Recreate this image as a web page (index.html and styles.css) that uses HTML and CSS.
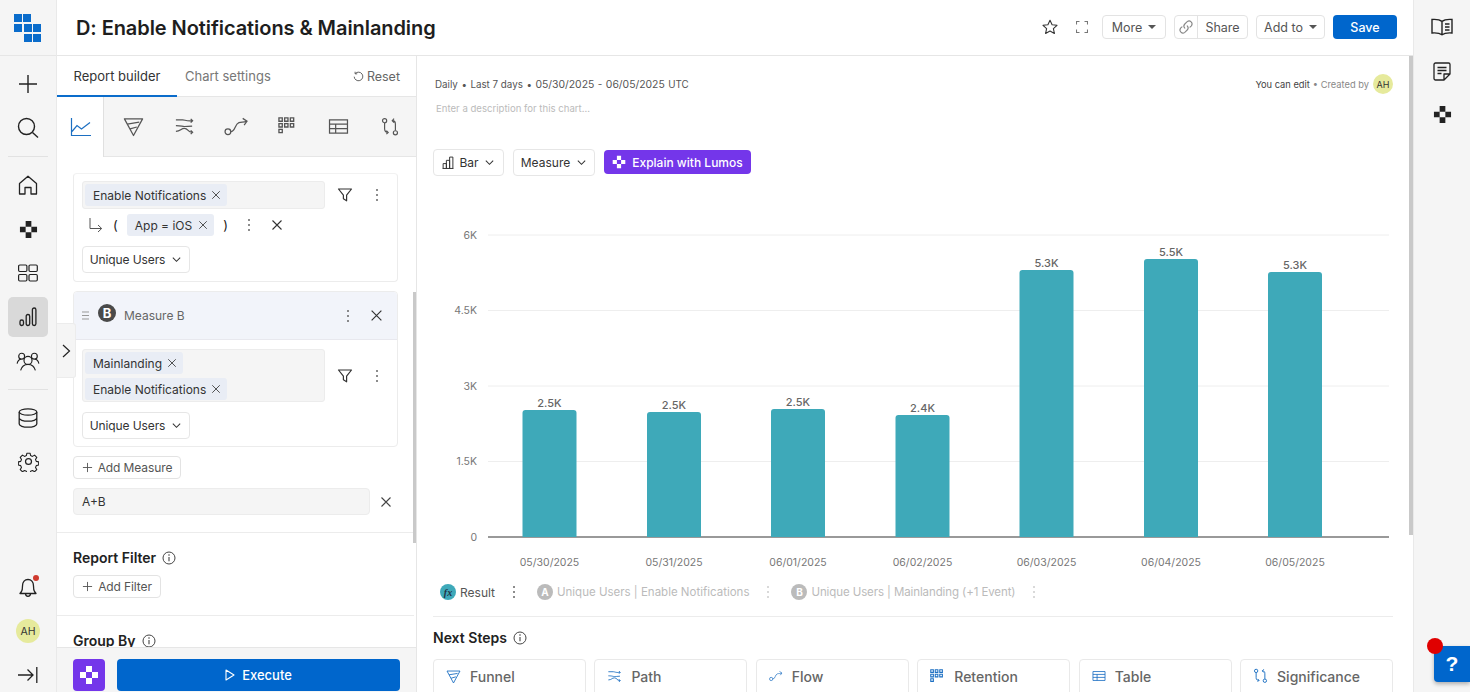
FILE: index.html
```html
<!DOCTYPE html>
<html lang="en">
<head>
<meta charset="utf-8">
<title>D: Enable Notifications &amp; Mainlanding</title>
<link rel="stylesheet" href="styles.css">
</head>
<body>
<svg class="defs" width="0" height="0" aria-hidden="true">
  <defs>
    <symbol id="lumos" viewBox="0 0 20 20"><path d="M7 1h6v6H7zM1 7h6v6H1zM13 7h6v6h-6zM7 13h6v6H7z" fill="currentColor"/></symbol>
    <symbol id="x" viewBox="0 0 12 12"><path d="M1.500 1.500l9 9M10.500 1.500l-9 9" fill="none" stroke="currentColor" stroke-width="1.100"/></symbol>
    <symbol id="dots" viewBox="0 0 4 14"><g fill="currentColor"><circle cx="2" cy="2" r="1"/><circle cx="2" cy="7" r="1"/><circle cx="2" cy="12" r="1"/></g></symbol>
    <symbol id="chev" viewBox="0 0 12 12"><path d="M2 4l4 4 4-4" fill="none" stroke="currentColor" stroke-width="1.100"/></symbol>
    <symbol id="filter" viewBox="0 0 16 16"><path d="M1.500 2h13L9.600 8.200v5.600l-3.200-2V8.200z" fill="none" stroke="currentColor" stroke-width="1.200" stroke-linejoin="round"/></symbol>
    <symbol id="info" viewBox="0 0 14 14"><circle cx="7" cy="7" r="6" fill="none" stroke="currentColor" stroke-width="1"/><path d="M7 6v4.200" stroke="currentColor" stroke-width="1.100"/><circle cx="7" cy="4" r=".8" fill="currentColor"/></symbol>
    <symbol id="plus" viewBox="0 0 12 12"><path d="M6 1v10M1 6h10" fill="none" stroke="currentColor" stroke-width="1"/></symbol>
    <symbol id="t-line" viewBox="0 0 22 22"><path d="M1.500 2v17.500h19.500M2 15.500l5-6 4.500 3.500 8.500-6.500" fill="none" stroke="currentColor" stroke-width="1.200"/></symbol>
    <symbol id="t-funnel" viewBox="0 0 22 22"><path d="M1.500 3h19L11 20.500zM4.500 8.500L17 6.500M7.500 13.500l7-2" fill="none" stroke="currentColor" stroke-width="1.300" stroke-linejoin="round"/></symbol>
    <symbol id="t-path" viewBox="0 0 22 22"><path d="M2 4h7c3 0 3 1.500 10 1M17.500 3l2 2-2 2M2 10c6 0 6 1 9 1s3 0 8-.5M2 16c5 0 5-3 9-3s3 4 8 4M17.500 15l2 2-2 2" fill="none" stroke="currentColor" stroke-width="1.300"/></symbol>
    <symbol id="t-flow" viewBox="0 0 26 22"><circle cx="4" cy="16.500" r="3" fill="none" stroke="currentColor" stroke-width="1.300"/><path d="M7 16.500c5 0 4-8 8.500-9.500 3-1 5 0 8-1.500M19.500 2.500l4.500 3-3 4" fill="none" stroke="currentColor" stroke-width="1.300"/></symbol>
    <symbol id="t-ret" viewBox="0 0 20 20"><g fill="none" stroke="currentColor" stroke-width="1.400"><path d="M1 1h3.500v3.500H1zM7 1h3.500v3.500H7zM13 1h3.500v3.500H13zM1 7h3.500v3.500H1zM7 7h3.500v3.500H7zM13 7h3.500v3.500H13zM1 13h3.500v3.500H1z"/></g></symbol>
    <symbol id="t-table" viewBox="0 0 22 18"><path d="M1.500 2h19v14h-19zM1.500 6.500h19M1.500 11.200h19M8 6.500V16" fill="none" stroke="currentColor" stroke-width="1.300"/></symbol>
    <symbol id="t-sig" viewBox="0 0 20 22"><g fill="none" stroke="currentColor" stroke-width="1.300"><circle cx="4" cy="4" r="2.300"/><circle cx="16" cy="17.500" r="2.300"/><path d="M4 6.500V13c0 3 1 4 4 4M6 15l2 2-2 2M16 15V8c0-3-1-4-3.500-4M14.500 1.800L12.500 4l2 2.200"/></g></symbol>
  </defs>
</svg>
<div class="app">
  <nav class="rail">
    <div class="logo-cell">
      <svg class="logo" width="28" height="28" viewBox="14 13 28 28"><path d="M14 13h8v8h-8zM23 13h8v8h-8zM14 23h8v8h-8zM24 23h8v8h-8zM33 23h8v8h-8zM24 33h8v8h-8zM33 33h8v8h-8z" fill="#0a6ccb"/></svg>
    </div>
    <div class="rail-item rail-first"><svg width="20" height="20" viewBox="0 0 20 20"><path d="M10 1v18M1 10h18" fill="none" stroke="currentColor" stroke-width="1.400"/></svg></div>
    <div class="rail-item"><svg width="22" height="22" viewBox="0 0 22 22"><circle cx="9.500" cy="9.500" r="8" fill="none" stroke="currentColor" stroke-width="1.400"/><path d="M15.500 15.500l5.500 5" stroke="currentColor" stroke-width="1.400"/></svg></div>
    <div class="rail-sep"></div>
    <div class="rail-item"><svg width="20" height="20" viewBox="0 0 20 20"><path d="M1.500 8.500L10 1.200l8.500 7.300V19h-5.500v-6.500H7V19H1.500z" fill="none" stroke="currentColor" stroke-width="1.300" stroke-linejoin="round"/></svg></div>
    <div class="rail-item"><svg width="19" height="19"><use href="#lumos"/></svg></div>
    <div class="rail-item"><svg width="20" height="18" viewBox="0 0 20 18"><g fill="none" stroke="currentColor" stroke-width="1.200"><rect x=".6" y="1" width="8.300" height="6.500" rx="1.200"/><rect x="11" y="1" width="8.300" height="6.500" rx="1.200"/><rect x=".6" y="10.500" width="8.300" height="6.500" rx="1.200"/><rect x="11" y="10.500" width="8.300" height="6.500" rx="1.200"/></g></svg></div>
    <div class="rail-item rail-active"><svg width="18" height="20" viewBox="0 0 18 20"><g fill="none" stroke="currentColor" stroke-width="1.300"><rect x="1" y="13" width="3.500" height="5.500" rx="1.700"/><rect x="7.200" y="7.500" width="3.500" height="11" rx="1.700"/><rect x="13.400" y="1" width="3.500" height="17.500" rx="1.700"/></g></svg></div>
    <div class="rail-item"><svg width="24" height="19" viewBox="0 0 22 18"><g fill="none" stroke="currentColor" stroke-width="1.100"><circle cx="11" cy="8" r="3.800"/><path d="M4 17.500c1-4 3.500-5.800 7-5.800s6 1.800 7 5.800"/><circle cx="5" cy="4" r="2.800"/><circle cx="17" cy="4" r="2.800"/><path d="M.7 11c.5-2.500 2-4 3.800-4.200M21.300 11c-.5-2.500-2-4-3.800-4.200"/></g></svg></div>
    <div class="rail-sep"></div>
    <div class="rail-item"><svg width="20" height="20" viewBox="0 0 20 20"><g fill="none" stroke="currentColor" stroke-width="1.300"><ellipse cx="10" cy="4" rx="8.800" ry="3.200"/><path d="M1.200 4v12c0 1.800 4 3.200 8.800 3.200s8.800-1.400 8.800-3.200V4M1.200 10c0 1.800 4 3.200 8.800 3.200s8.800-1.400 8.800-3.200"/></g></svg></div>
    <div class="rail-item rail-gear"><svg width="21" height="21" viewBox="0 0 24 24"><g fill="none" stroke="currentColor" stroke-width="1.400" stroke-linejoin="round"><circle cx="12" cy="12" r="3.400"/><path d="M10 1.500h4l.7 3 2.300 1 2.700-1.600 2.800 2.900-1.600 2.600 1 2.400 3 .7v4l-3 .7-1 2.300 1.600 2.700-2.800 2.800-2.700-1.600-2.300 1-.7 3h-4l-.7-3-2.300-1-2.700 1.600-2.800-2.800 1.600-2.700-1-2.300-3-.7v-4l3-.7 1-2.400L1.500 6.800l2.800-2.900L7 5.500l2.300-1z" transform="translate(1.200 1.200) scale(.9)"/></g></svg></div>
    <div class="rail-spacer"></div>
    <div class="rail-item">
      <span class="bell"><svg width="20" height="21" viewBox="0 0 20 21"><path d="M3.500 14.500c1-1.500 1-3 1-5.500 0-4 2.300-6.500 5.500-6.500s5.500 2.500 5.500 6.500c0 2.500 0 4 1 5.500l1.500 2H2zM7.500 16.500c0 1.800 1 2.800 2.500 2.800s2.500-1 2.500-2.800" fill="none" stroke="currentColor" stroke-width="1.300" stroke-linejoin="round"/></svg><i class="bell-dot"></i></span>
    </div>
    <div class="rail-item"><span class="avatar">AH</span></div>
    <div class="rail-item rail-last"><svg width="20" height="16" viewBox="0 0 20 16"><path d="M0 8h15M9.500 2.500L15 8l-5.500 5.500M18.800 0v16" fill="none" stroke="currentColor" stroke-width="1.300"/></svg></div>
  </nav>

  <div class="center">
    <header class="topbar">
      <h1 class="title">D: Enable Notifications &amp; Mainlanding</h1>
      <div class="top-actions">
        <svg class="star" width="16" height="16" viewBox="0 0 16 16"><path d="M8 1.200l2.100 4.500 4.900.6-3.600 3.300 1 4.900L8 12.100l-4.400 2.400 1-4.900L1 6.300l4.900-.6z" fill="none" stroke="#333" stroke-width="1.100" stroke-linejoin="round"/></svg>
        <svg class="expand" width="12" height="12" viewBox="0 0 12 12"><path d="M.5 3.500v-3h3M8.500.5h3v3M11.500 8.500v3h-3M3.500 11.500h-3v-3" fill="none" stroke="#777" stroke-width="1.100"/></svg>
        <button class="btn btn-more">More<i class="caret"></i></button>
        <div class="btn share"><span class="share-ico"><svg width="16" height="16" viewBox="0 0 16 16"><g fill="none" stroke="#888" stroke-width="1.100" stroke-linecap="round"><path d="M6.800 9.200a3 3 0 0 1 0-4.200l2.400-2.400a3 3 0 0 1 4.200 4.200l-1.400 1.400"/><path d="M9.200 6.800a3 3 0 0 1 0 4.200l-2.400 2.400a3 3 0 0 1-4.200-4.200L4 7.800"/></g></svg></span><span class="share-txt">Share</span></div>
        <button class="btn btn-add">Add to<i class="caret"></i></button>
        <button class="btn-save">Save</button>
      </div>
    </header>

    <div class="work">
      <aside class="panel">
        <div class="tabs">
          <div class="tab tab-on">Report builder</div>
          <div class="tab">Chart settings</div>
          <div class="reset"><svg width="11" height="11" viewBox="0 0 12 12"><path d="M2.500 2.800a4.700 4.700 0 1 1-1.200 3.400M2.300.8v2.300h2.300" fill="none" stroke="#555" stroke-width="1"/></svg>Reset</div>
        </div>
        <div class="types">
          <div class="type type-on"><svg width="22" height="22"><use href="#t-line"/></svg></div>
          <div class="type"><svg width="21" height="21"><use href="#t-funnel"/></svg></div>
          <div class="type"><svg width="21" height="21"><use href="#t-path"/></svg></div>
          <div class="type"><svg width="25" height="21"><use href="#t-flow"/></svg></div>
          <div class="type"><svg width="19" height="19"><use href="#t-ret"/></svg></div>
          <div class="type"><svg width="21" height="17"><use href="#t-table"/></svg></div>
          <div class="type"><svg width="18" height="20"><use href="#t-sig"/></svg></div>
        </div>
        <div class="scroll">
          <section class="card card-a">
            <div class="row-field">
              <div class="field field-one"><span class="tag">Enable Notifications<svg width="10" height="10"><use href="#x"/></svg></span></div>
              <svg class="fil" width="16" height="16"><use href="#filter"/></svg>
              <svg class="dot3" width="4" height="14"><use href="#dots"/></svg>
            </div>
            <div class="cond">
              <svg class="arrow" width="16" height="16" viewBox="0 0 16 16"><path d="M2 1v10.500h11.500M10 8l3.700 3.500L10 15" fill="none" stroke="#555" stroke-width="1"/></svg>
              <span class="paren">(</span>
              <span class="tag">App = iOS<svg width="10" height="10"><use href="#x"/></svg></span>
              <span class="paren">)</span>
              <svg class="dot3" width="4" height="14"><use href="#dots"/></svg>
              <svg class="cond-x" width="12" height="12"><use href="#x"/></svg>
            </div>
            <button class="btn-users">Unique Users<svg width="11" height="11"><use href="#chev"/></svg></button>
          </section>

          <section class="card card-b">
            <div class="card-head">
              <svg class="grip" width="7" height="9" viewBox="0 0 7 9"><path d="M0 1h7M0 4.500h7M0 8h7" stroke="#999" stroke-width="1"/></svg>
              <span class="badge">B</span>
              <span class="head-name">Measure B</span>
              <svg class="dot3" width="4" height="14"><use href="#dots"/></svg>
              <svg class="head-x" width="13" height="13"><use href="#x"/></svg>
            </div>
            <div class="card-body">
              <div class="row-field">
                <div class="field field-two">
                  <span class="tag">Mainlanding<svg width="10" height="10"><use href="#x"/></svg></span>
                  <span class="tag">Enable Notifications<svg width="10" height="10"><use href="#x"/></svg></span>
                </div>
                <svg class="fil" width="16" height="16"><use href="#filter"/></svg>
                <svg class="dot3" width="4" height="14"><use href="#dots"/></svg>
              </div>
              <button class="btn-users">Unique Users<svg width="11" height="11"><use href="#chev"/></svg></button>
            </div>
          </section>

          <button class="btn-ghost btn-measure"><svg width="11" height="11"><use href="#plus"/></svg>Add Measure</button>
          <div class="formula">
            <div class="formula-input">A+B</div>
            <svg width="12" height="12"><use href="#x"/></svg>
          </div>
          <div class="rule rule-a"></div>
          <h3 class="sec">Report Filter<svg width="14" height="14"><use href="#info"/></svg></h3>
          <button class="btn-ghost btn-filter"><svg width="11" height="11"><use href="#plus"/></svg>Add Filter</button>
          <div class="rule rule-b"></div>
          <h3 class="sec">Group By<svg width="14" height="14"><use href="#info"/></svg></h3>
          <i class="panel-bar"></i>
        </div>
        <div class="foot">
          <div class="lumos-btn"><svg width="20" height="20"><use href="#lumos"/></svg></div>
          <button class="exec"><svg width="10" height="12" viewBox="0 0 10 12"><path d="M1 1l8 5-8 5z" fill="none" stroke="#fff" stroke-width="1.100" stroke-linejoin="round"/></svg>Execute</button>
        </div>
        <div class="expander"><svg width="9" height="14" viewBox="0 0 9 14"><path d="M1 1l6.500 6L1 13" fill="none" stroke="#222" stroke-width="1.200"/></svg></div>
      </aside>

      <main class="main">
        <div class="meta">
          <div class="meta-left"><span>Daily</span><span>•</span><span>Last 7 days</span><span>•</span><span class="date">05/30/2025</span><span>-</span><span class="date">06/05/2025</span><span>UTC</span></div>
          <div class="meta-right"><span class="can">You can edit</span> • Created by <span class="avatar avatar-sm">AH</span></div>
        </div>
        <div class="desc">Enter a description for this chart...</div>
        <div class="controls">
          <button class="ctl ctl-bar"><svg width="12" height="13" viewBox="0 0 11 12"><path d="M.5 11.500h10M1 11.500V7h3v4.500M4 11.500V4h3v7.500M7 11.500V1h3v10.500" fill="none" stroke="#333" stroke-width=".9"/></svg>Bar<svg width="11" height="11"><use href="#chev"/></svg></button>
          <button class="ctl ctl-measure">Measure<svg width="11" height="11"><use href="#chev"/></svg></button>
          <button class="explain"><svg width="14" height="14"><use href="#lumos"/></svg>Explain with Lumos</button>
        </div>
        <svg class="chart" width="960" height="400" viewBox="433 176 960 400">
          <g class="grid">
            <path d="M488 235H1389M488 310.500H1389M488 386H1389M488 461.500H1389"/>
          </g>
          <path class="axis" d="M488 537H1389"/>
          <g class="ylab">
            <text x="477" y="239">6K</text>
            <text x="477" y="314">4.5K</text>
            <text x="477" y="390">3K</text>
            <text x="477" y="465">1.5K</text>
            <text x="477" y="541">0</text>
          </g>
          <g class="bars">
            <path d="M522.500 537V413a3 3 0 0 1 3-3h48a3 3 0 0 1 3 3V537z"/>
            <path d="M647 537V415a3 3 0 0 1 3-3h48a3 3 0 0 1 3 3V537z"/>
            <path d="M771 537V412a3 3 0 0 1 3-3h48a3 3 0 0 1 3 3V537z"/>
            <path d="M895.500 537V418a3 3 0 0 1 3-3h48a3 3 0 0 1 3 3V537z"/>
            <path d="M1019.500 537V273a3 3 0 0 1 3-3h48a3 3 0 0 1 3 3V537z"/>
            <path d="M1144 537V262a3 3 0 0 1 3-3h48a3 3 0 0 1 3 3V537z"/>
            <path d="M1268 537V275a3 3 0 0 1 3-3h48a3 3 0 0 1 3 3V537z"/>
          </g>
          <g class="vals">
            <text x="549.500" y="407">2.5K</text>
            <text x="674" y="409">2.5K</text>
            <text x="798" y="406">2.5K</text>
            <text x="922.500" y="412">2.4K</text>
            <text x="1046.500" y="267">5.3K</text>
            <text x="1171" y="256">5.5K</text>
            <text x="1295" y="269">5.3K</text>
          </g>
          <g class="xlab">
            <text x="549.500" y="566">05/30/2025</text>
            <text x="674" y="566">05/31/2025</text>
            <text x="798" y="566">06/01/2025</text>
            <text x="922.500" y="566">06/02/2025</text>
            <text x="1046.500" y="566">06/03/2025</text>
            <text x="1171" y="566">06/04/2025</text>
            <text x="1295" y="566">06/05/2025</text>
          </g>
        </svg>
        <div class="legend">
          <span class="lg lg-on"><i class="lg-ico lg-fx">fx</i>Result</span>
          <svg class="lg-dots dots-on" width="4" height="14"><use href="#dots"/></svg>
          <span class="lg"><i class="lg-ico">A</i>Unique Users | Enable Notifications</span>
          <svg class="lg-dots" width="4" height="14"><use href="#dots"/></svg>
          <span class="lg lg-tight"><i class="lg-ico">B</i>Unique Users | Mainlanding (+1 Event)</span>
          <svg class="lg-dots" width="4" height="14"><use href="#dots"/></svg>
        </div>
        <h3 class="next">Next Steps<svg width="14" height="14"><use href="#info"/></svg></h3>
        <div class="steps">
          <div class="step"><svg width="15" height="15"><use href="#t-funnel"/></svg>Funnel</div>
          <div class="step"><svg width="15" height="15"><use href="#t-path"/></svg>Path</div>
          <div class="step"><svg width="14" height="12"><use href="#t-flow"/></svg>Flow</div>
          <div class="step"><svg width="15" height="15"><use href="#t-ret"/></svg>Retention</div>
          <div class="step"><svg width="14" height="12"><use href="#t-table"/></svg>Table</div>
          <div class="step"><svg width="15" height="16"><use href="#t-sig"/></svg>Significance</div>
        </div>
        <i class="main-bar"></i>
      </main>
    </div>
  </div>

  <nav class="rail-right">
    <div class="rr-item"><svg width="22" height="19" viewBox="0 0 22 19"><g fill="none" stroke="#222" stroke-width="1.400"><path d="M11 3.500C9 1.800 5 1.200 1 1.500v13.500c4-.3 8 .3 10 1.800 2-1.500 6-2.100 10-1.800V1.500c-4-.3-8 .3-10 2zM11 3.500v13.300"/><path d="M14 6h4.500M14 9h4.500M14 12h4.500"/></g></svg></div>
    <div class="rr-item"><svg width="18" height="19" viewBox="0 0 18 19"><g fill="none" stroke="#222" stroke-width="1.300" stroke-linejoin="round"><path d="M2.500 1h13a1.500 1.500 0 0 1 1.500 1.500V12l-6 6H2.500A1.500 1.500 0 0 1 1 16.500v-14A1.500 1.500 0 0 1 2.500 1zM11 18v-6h6"/><path d="M4.500 5.500h9M4.500 8.500h9M4.500 11.500h4"/></g></svg></div>
    <div class="rr-item"><svg width="19" height="19"><use href="#lumos"/></svg></div>
  </nav>
</div>
<div class="help"><span class="help-q">?</span><i class="help-dot"></i></div>
</body>
</html>
```
FILE: styles.css
```css
* { box-sizing: border-box; }
html, body { margin: 0; height: 100%; overflow: hidden; }
body { font-family: Inter, "Liberation Sans", sans-serif; color: #222; background: #fff; position: relative; }
button { font-family: inherit; cursor: pointer; }
i { font-style: normal; }
.defs { position: absolute; }
.app { display: flex; height: 692px; overflow: hidden; }

/* left rail */
.rail { width: 57px; flex: none; background: #f5f5f5; border-right: 1px solid #e9e9e9; display: flex; flex-direction: column; align-items: center; color: #222; }
.logo-cell { width: 100%; height: 56px; display: flex; align-items: center; justify-content: center; border-bottom: 1px solid #e6e6e6; }
.rail-item { width: 40px; height: 44px; flex: none; display: flex; align-items: center; justify-content: center; }
.rail-first { margin-top: 6px; }
.rail-sep { width: 40px; height: 1px; background: #e2e2e2; margin: 6px 0; flex: none; }
.rail-active { background: #d9d9d9; border-radius: 5px; height: 40px; margin: 2px 0; }
.rail-gear { padding-bottom: 2px; }
.rail-spacer { flex: 1; }
.rail-last { height: 34px; margin-top: 5px; }
.bell { position: relative; display: flex; }
.bell-dot { position: absolute; right: -1px; top: -2px; width: 6px; height: 6px; border-radius: 50%; background: #cf3a2e; }
.avatar { width: 24px; height: 24px; border-radius: 50%; background: #e6ea9c; font-size: 10.500px; color: #333; display: flex; align-items: center; justify-content: center; }
.avatar-sm { width: 20px; height: 20px; font-size: 9px; margin-left: 1px; }

/* top bar */
.center { flex: 1; min-width: 0; display: flex; flex-direction: column; }
.topbar { height: 56px; flex: none; border-bottom: 1px solid #e6e6e6; display: flex; align-items: center; justify-content: space-between; padding: 0 16px 0 19px; }
.title { margin: 0; font-size: 20px; font-weight: 600; color: #1e1e1e; letter-spacing: -.07px; }
.top-actions { display: flex; align-items: center; margin-top: -1px; }
.star { margin-right: 18px; }
.expand { margin-right: 14px; }
.btn { height: 24px; border: 1px solid #e3e3e3; border-radius: 4px; background: #fff; font-size: 12.500px; color: #555; display: flex; align-items: center; padding: 0; }
.btn-more { width: 64px; justify-content: center; gap: 6px; margin-right: 8px; }
.btn-add { width: 69px; justify-content: center; gap: 6px; margin-right: 8px; }
.caret { width: 0; height: 0; border-left: 4px solid transparent; border-right: 4px solid transparent; border-top: 4px solid #555; }
.share { width: 74px; margin-right: 8px; }
.share-ico { width: 23px; height: 100%; display: flex; align-items: center; justify-content: center; border-right: 1px solid #e3e3e3; }
.share-txt { flex: 1; text-align: center; }
.btn-save { width: 64px; height: 24px; border: 0; border-radius: 4px; background: #0066cc; color: #fff; font-size: 12.500px; font-weight: 500; }

/* left panel */
.work { flex: 1; min-height: 0; display: flex; }
.panel { width: 360px; flex: none; border-right: 1px solid #e6e6e6; display: flex; flex-direction: column; position: relative; }
.tabs { height: 41px; flex: none; display: flex; align-items: center; border-bottom: 1px solid #e6e6e6; }
.tab { font-size: 13px; color: #777; height: 100%; display: flex; align-items: center; }
.tab-on { color: #333; width: 120px; justify-content: center; height: 41px; border-top: 1px solid transparent; border-bottom: 2px solid #0a6ccb; margin-right: 8px; margin-top: 0; margin-bottom: -1px; }
.reset { margin-left: auto; margin-right: 16px; font-size: 12.500px; color: #666; display: flex; align-items: center; gap: 3px; }
.types { height: 60px; flex: none; display: flex; background: #f5f5f5; border-bottom: 1px solid #e6e6e6; color: #555; }
.type { width: 52px; display: flex; align-items: center; justify-content: center; }
.type-on { width: 48px; background: #fff; color: #1c6fc2; border-right: 1px solid #e0e0e0; margin-bottom: -1px; padding-left: 1px; margin-right: 3px; }
.scroll { flex: 1; min-height: 0; overflow: hidden; padding: 16px 18px 0 16px; position: relative; }
.card { border: 1px solid #ececec; border-radius: 4px; width: 325px; }
.card-a { height: 109px; padding: 7px 8px 0; margin-bottom: 9px; border-top-color: #f2f2f2; }
.row-field { display: flex; align-items: center; }
.field { width: 243px; background: #f5f5f5; border: 1px solid #ececec; border-radius: 3px; padding: 2px; display: flex; flex-wrap: wrap; gap: 4px; }
.field-one { height: 28px; }
.field-two { height: 53px; }
.tag { height: 22px; background: #e9edf5; border-radius: 3px; font-size: 12px; color: #333; display: inline-flex; align-items: center; gap: 5px; padding: 0 6px 0 8px; white-space: nowrap; }
.tag svg { color: #444; }
.fil { margin-left: 12px; color: #333; }
.row-field .dot3 { margin-left: 22px; color: #666; }
.dot3 { color: #666; flex: none; }
.cond { height: 32px; display: flex; align-items: center; padding-left: 6px; }
.paren { font-size: 13px; color: #222; margin: 0 9px; }
.cond .tag { gap: 6px; }
.cond .dot3 { margin-left: 10px; }
.cond-x { margin-left: 20px; color: #333; }
.btn-users { display: flex; align-items: center; gap: 6px; height: 27px; width: 108px; justify-content: center; background: #fff; border: 1px solid #e6e6e6; border-radius: 4px; font-size: 12px; letter-spacing: -.1px; color: #333; padding: 0; }
.card-a .btn-users { margin-top: 5px; }
.card-b { height: 156px; margin-bottom: 9px; }
.card-head { height: 48px; background: #f2f4fa; border-bottom: 1px solid #e8e8ee; display: flex; align-items: center; padding: 0 14px 0 8px; border-radius: 4px 4px 0 0; }
.grip { margin-right: 9px; }
.badge { width: 18px; height: 18px; border-radius: 50%; background: #4a4a4a; color: #fff; font-size: 13px; font-weight: 700; display: flex; align-items: center; justify-content: center; margin-top: -6px; }
.head-name { margin-left: 8px; font-size: 12px; color: #666; flex: 1; }
.card-head .dot3 { margin-right: 1px; }
.head-x { margin-left: 19px; color: #333; }
.card-body { padding: 9px 8px 0; }
.card-body .btn-users { margin-top: 10px; }
.btn-ghost { display: flex; align-items: center; justify-content: center; gap: 5px; height: 23px; background: #fff; border: 1px solid #e3e3e3; border-radius: 4px; font-size: 12px; letter-spacing: -.1px; color: #555; padding: 0; }
.btn-measure { width: 108px; }
.btn-filter { width: 88px; }
.formula { display: flex; align-items: center; margin-top: 9px; color: #444; }
.formula-input { width: 297px; height: 27px; background: #f5f5f5; border: 1px solid #ececec; border-radius: 4px; font-size: 12px; color: #333; display: flex; align-items: center; padding-left: 8px; margin-right: 10px; }
.rule { height: 1px; background: #ececec; margin-left: -16px; margin-right: -16px; }
.rule-a { margin-top: 17px; }
.rule-b { margin-top: 17px; }
.sec { margin: 16px 0 8px; font-size: 14px; line-height: 18px; font-weight: 600; color: #222; display: flex; align-items: center; gap: 6px; }
.sec svg { color: #444; }
.panel-bar { position: absolute; right: 0; top: 135px; width: 3px; height: 251px; background: #c9c9c9; }
.foot { height: 45px; flex: none; background: #f5f5f5; border-top: 1px solid #e6e6e6; display: flex; padding: 11px 16px 0; gap: 12px; }
.lumos-btn { width: 32px; height: 32px; border-radius: 4px; background: #7436ea; color: #fff; display: flex; align-items: center; justify-content: center; }
.exec { flex: 1; height: 32px; border: 0; border-radius: 4px; background: #0066cc; color: #fff; font-size: 13px; font-weight: 500; display: flex; align-items: center; justify-content: center; gap: 7px; }
.expander { position: absolute; left: 0; top: 267px; width: 19px; height: 55px; background: #f5f5f5; border: 1px solid #ececec; border-left: 0; border-radius: 0 3px 3px 0; display: flex; align-items: center; justify-content: center; }

/* main */
.main { flex: 1; min-width: 0; padding: 16px 20px 0 16px; position: relative; overflow: hidden; }
.meta { height: 24px; display: flex; align-items: center; justify-content: space-between; }
.meta-left { font-size: 9.800px; color: #555; padding-left: 2px; white-space: nowrap; display: flex; align-items: center; gap: 3.500px; }
.date { font-size: 10.400px; }
.meta-right { font-size: 9.300px; color: #888; display: flex; align-items: center; gap: 3px; }
.can { color: #444; }
.desc { height: 16px; margin-top: 4px; font-size: 9.600px; line-height: 17px; color: #bbb; padding-left: 3px; }
.controls { display: flex; gap: 9px; margin-top: 33px; height: 27px; align-items: center; }
.ctl { height: 27px; background: #fff; border: 1px solid #e6e6e6; border-radius: 4px; font-size: 12px; color: #333; display: flex; align-items: center; justify-content: center; gap: 6px; padding: 0; }
.ctl-bar { width: 71px; gap: 5px; }
.ctl-measure { width: 82px; }
.explain { width: 147px; height: 24px; margin-top: -1px; border: 0; border-radius: 4px; background: #7436ea; color: #fff; font-size: 12px; font-weight: 500; display: flex; align-items: center; justify-content: center; gap: 6px; padding: 0; }
.chart { display: block; }
.grid path { stroke: #eeeeee; stroke-width: 1; fill: none; }
.axis { stroke: #777; stroke-width: 1.500; fill: none; }
.bars path { fill: #3ea9b9; }
.ylab text { font-size: 10.500px; fill: #777; text-anchor: end; }
.vals text { font-size: 11px; fill: #666; text-anchor: middle; font-weight: 500; }
.xlab text { font-size: 10.500px; fill: #777; text-anchor: middle; }
.legend { height: 24px; margin-top: 4px; display: flex; align-items: center; padding-left: 7px; font-size: 11.500px; color: #bbb; }
.lg { display: flex; align-items: center; gap: 4px; white-space: nowrap; }
.lg-on { color: #555; font-size: 12px; }
.lg-tight { letter-spacing: -.1px; }
.lg-ico { width: 16px; height: 16px; border-radius: 50%; background: #bbb; color: #fff; font-size: 10px; font-weight: 700; display: flex; align-items: center; justify-content: center; }
.lg-fx { background: #3ea9b9; color: #234; font-family: "Liberation Serif", serif; font-style: italic; }
.lg-dots { margin: 0 21px 0 17px; color: #ccc; flex: none; }
.dots-on { color: #666; }
.next { margin: 0; padding-top: 24px; position: relative; font-size: 14px; line-height: 20px; font-weight: 600; color: #222; display: flex; align-items: center; gap: 6px; height: 44px; }
.next::before { content: ""; position: absolute; left: 0; right: 0; top: 12px; height: 1px; background: #ececec; }
.next svg { color: #444; }
.steps { display: grid; grid-template-columns: repeat(6, 1fr); gap: 8.500px; margin-top: 11px; }
.step { height: 40px; border: 1px solid #e9e9e9; border-radius: 4px; font-size: 14px; font-weight: 500; color: #666; display: flex; align-items: center; gap: 9px; padding: 0 0 6px 12px; }
.step svg { color: #1c6fc2; flex: none; }
.main-bar { position: absolute; right: 0; top: 0; width: 4px; height: 479px; background: #c9c9c9; }

/* right rail */
.rail-right { width: 57px; flex: none; background: #f5f5f5; border-left: 1px solid #e9e9e9; padding-top: 6px; color: #222; }
.rr-item { height: 43.500px; display: flex; align-items: center; justify-content: center; }

/* help widget */
.help { position: absolute; left: 1434px; top: 646px; width: 36px; height: 36px; background: #0066cc; border-radius: 4px 0 0 4px; box-shadow: 0 2px 4px rgba(0,0,0,.3); display: flex; align-items: center; justify-content: center; }
.help-q { color: #fff; font-size: 21px; font-weight: 700; font-family: "Liberation Sans", sans-serif; }
.help-dot { position: absolute; left: -7px; top: -8px; width: 16px; height: 16px; border-radius: 50%; background: #e00000; }
```
